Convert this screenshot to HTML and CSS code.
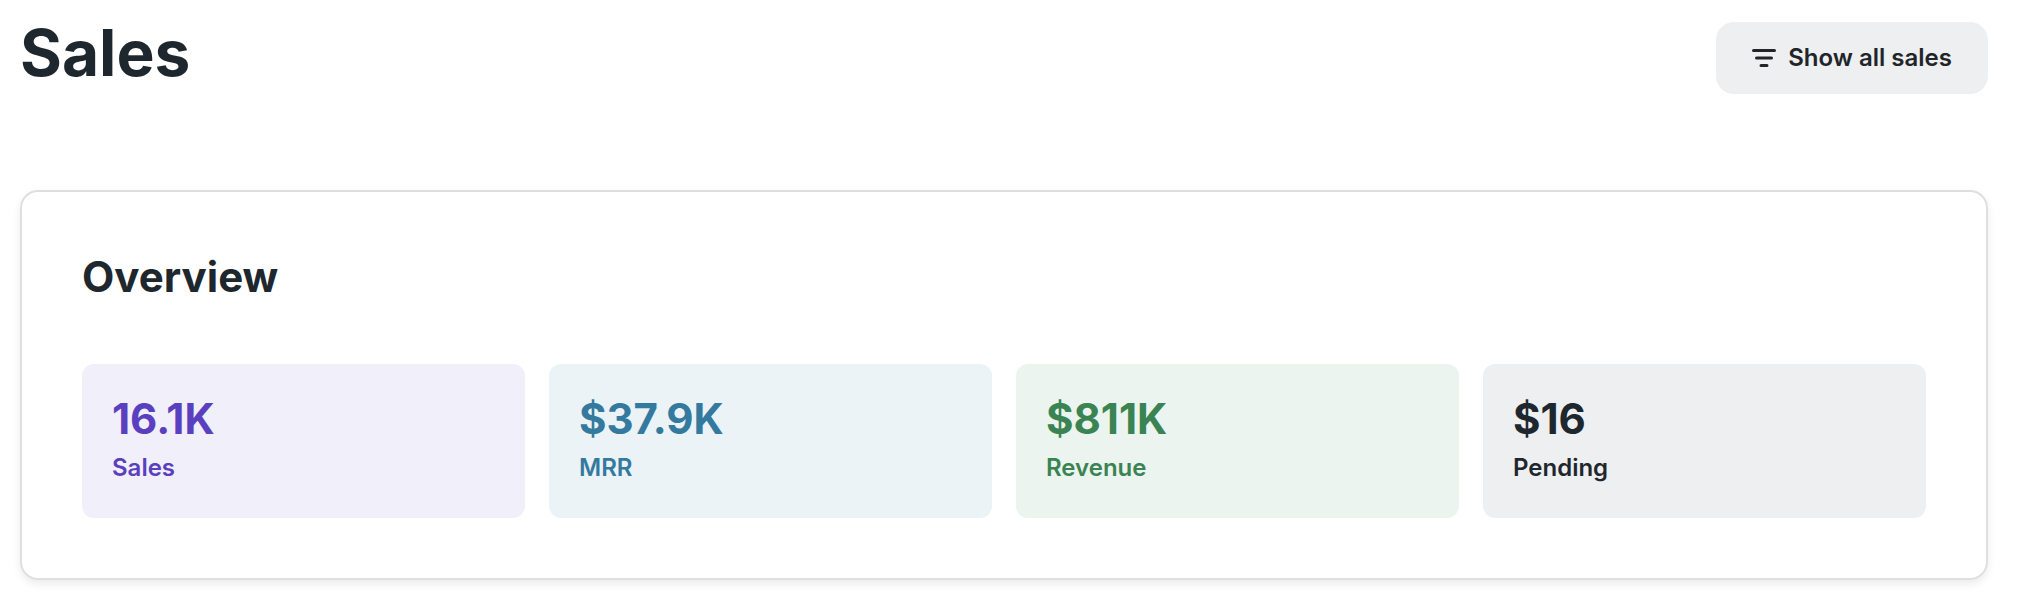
FILE: index.html
```html
<!DOCTYPE html>
<html lang="en">
<head>
  <meta charset="UTF-8" />
  <meta name="viewport" content="width=device-width, initial-scale=1" />
  <title>Sales</title>
  <link rel="stylesheet" href="styles.css">
</head>
<body>

  <header class="page-header">
    <h1>Sales</h1>
    <button type="button" class="filter-btn">
      <svg class="filter-icon" viewBox="0 0 24 24" aria-hidden="true">
        <path d="M1.5 4.5h21M4.5 12h15M9 19.5h6" />
      </svg>
      Show all sales
    </button>
  </header>

  <main class="card">
    <h2>Overview</h2>
    <div class="stats">
      <div class="stat purple">
        <div class="value">16.1K</div>
        <div class="label">Sales</div>
      </div>
      <div class="stat blue">
        <div class="value">$37.9K</div>
        <div class="label">MRR</div>
      </div>
      <div class="stat green">
        <div class="value">$811K</div>
        <div class="label">Revenue</div>
      </div>
      <div class="stat gray">
        <div class="value">$16</div>
        <div class="label">Pending</div>
      </div>
    </div>
  </main>

</body>
</html>
```
FILE: styles.css
```css
* {
  box-sizing: border-box;
}

body {
  margin: 0;
  padding: 22px 34px 32px 20px;
  background-color: #ffffff;
  color: #1e272e;
  font-family: Inter, sans-serif;
  font-optical-sizing: none;
}

h1, h2 {
  margin: 0;
  font-weight: 700;
}

.page-header {
  display: flex;
  justify-content: space-between;
  align-items: flex-start;
  margin-bottom: 96px;
}

h1 {
  font-size: 64px;
  line-height: 62px;
}

.filter-btn {
  display: flex;
  align-items: center;
  gap: 12px;
  padding: 18px 36px;
  border: none;
  border-radius: 18px;
  background-color: #eeeff1;
  color: #212529;
  font-family: inherit;
  font-size: 24px;
  font-weight: 600;
  line-height: 36px;
  cursor: pointer;
}

.filter-icon {
  width: 24px;
  height: 24px;
  fill: none;
  stroke: currentColor;
  stroke-width: 3;
  stroke-linecap: round;
}

.card {
  padding: 60px;
  border: 2px solid #dedfe0;
  border-radius: 18px;
  box-shadow: 0 4px 8px rgba(0, 0, 0, 0.08);
}

h2 {
  margin-bottom: 62px;
  font-size: 42px;
  line-height: 50px;
}

.stats {
  display: grid;
  grid-template-columns: repeat(4, 1fr);
  gap: 24px;
}

.stat {
  padding: 30px;
  border-radius: 12px;
}

.value {
  font-size: 42px;
  font-weight: 700;
  line-height: 50px;
}

.label {
  margin-top: 4px;
  font-size: 24px;
  font-weight: 600;
  line-height: 40px;
}

.purple {
  background-color: #f1effa;
  color: #5a40bf;
}

.blue {
  background-color: #ebf3f7;
  color: #347a9e;
}

.green {
  background-color: #ebf4ef;
  color: #3a8353;
}

.gray {
  background-color: #eeeff1;
  color: #1e272e;
}
```
